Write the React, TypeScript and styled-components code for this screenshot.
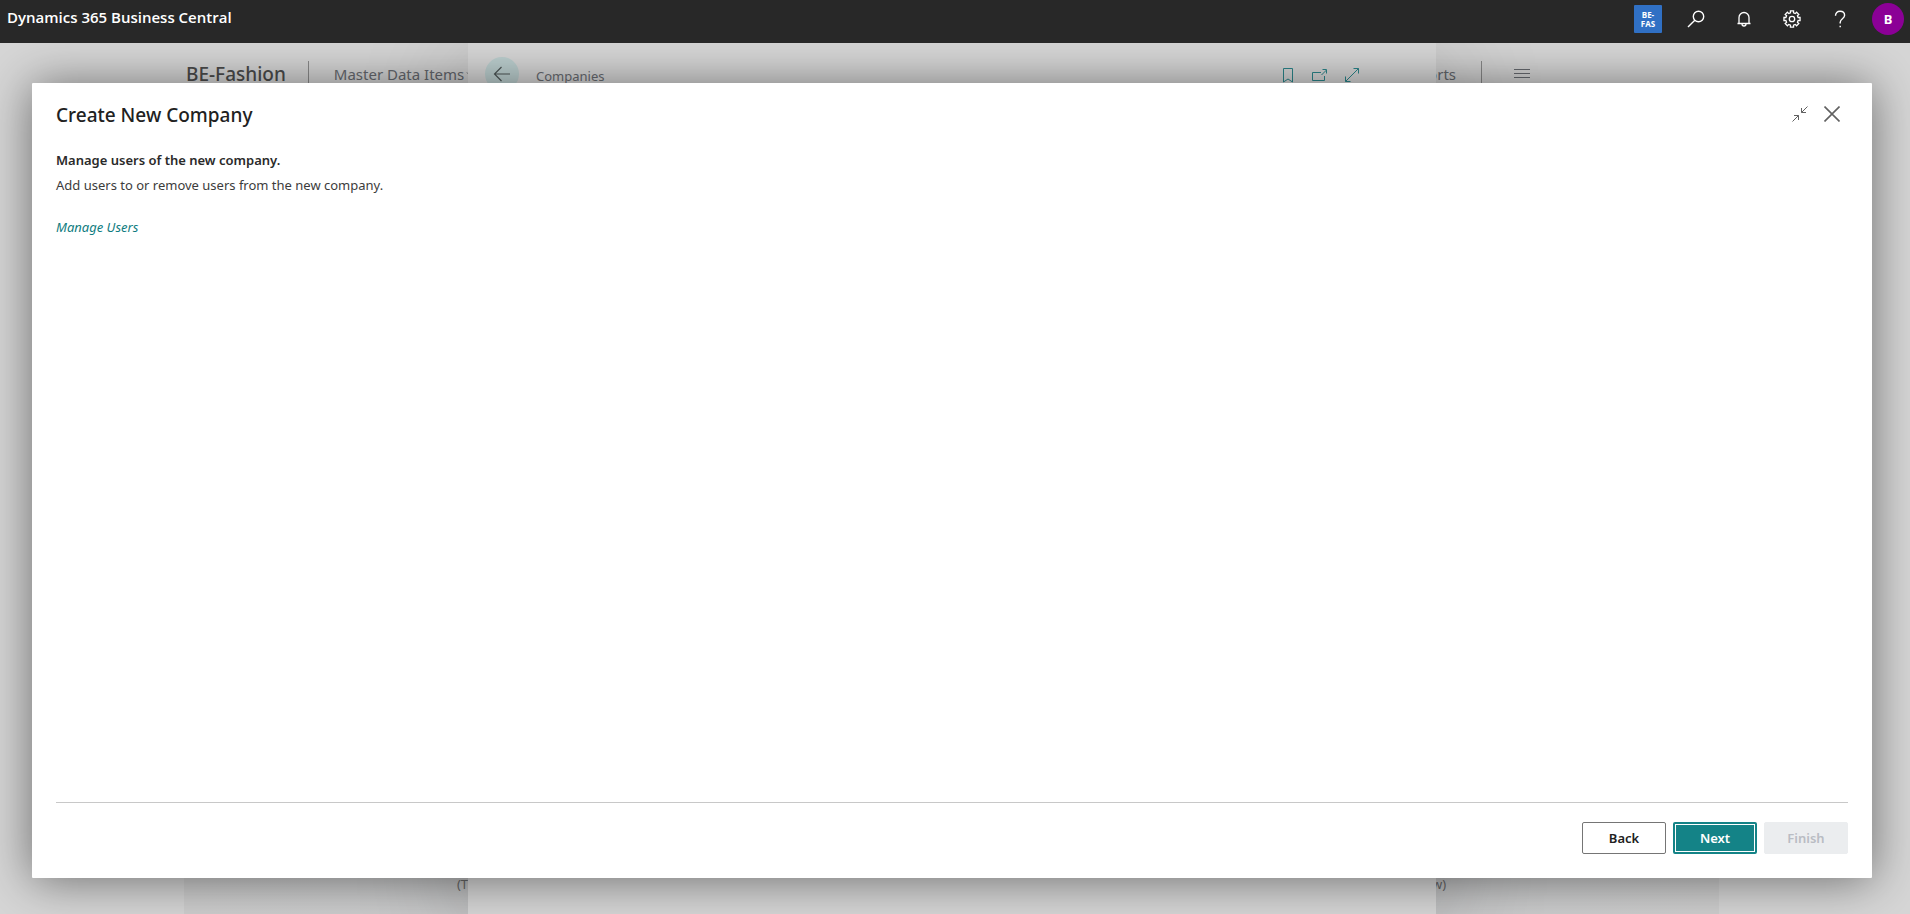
import React from "react";
import styled, { createGlobalStyle, css } from "styled-components";

const GlobalStyle = createGlobalStyle`
  * { box-sizing: border-box; }
  html, body { margin: 0; height: 100%; }
  body {
    font-family: "Noto Sans", "Open Sans", sans-serif;
    font-size: 13px;
    line-height: 20px;
    color: #212121;
    background: #d6d6d6;
    overflow: hidden;
  }
  h1, h2, h3, p { margin: 0; }
  button { font: inherit; color: inherit; cursor: pointer; }
`;

const Shell = styled.div`
  display: flex;
  flex-direction: column;
  height: 100vh;
`;

const TopBar = styled.header`
  display: flex;
  justify-content: space-between;
  align-items: flex-start;
  height: 43px;
  padding: 0 6px 0 7px;
  background: #282828;
  color: #fff;
`;

const Product = styled.a`
  padding-top: 7px;
  font-family: "Open Sans", "Noto Sans", sans-serif;
  font-size: 15px;
  font-weight: 600;
  color: #fff;
  text-decoration: none;
`;

const TopActions = styled.div`
  display: flex;
  align-items: center;
  height: 38px;
`;

const TopButton = styled.button`
  display: grid;
  place-items: center;
  width: 48px;
  height: 38px;
  padding: 0;
  border: 0;
  background: none;
`;

const CompanyBadge = styled.span`
  display: grid;
  place-items: center;
  width: 28px;
  height: 28px;
  border-radius: 1px;
  background: #3070c4;
  font-family: "Open Sans", "Noto Sans", sans-serif;
  font-size: 8px;
  font-weight: 700;
  line-height: 9px;
`;

const Avatar = styled.button`
  width: 32px;
  height: 32px;
  margin-left: 8px;
  padding: 0;
  border: 0;
  border-radius: 50%;
  background: #8b0096;
  font-size: 13px;
  font-weight: 700;
`;

const Stage = styled.main`
  position: relative;
  flex: 1;
  overflow: hidden;
`;

const RoleCenter = styled.div`
  display: flex;
  flex-direction: column;
  justify-content: space-between;
  height: 100%;
  padding: 18px 10% 0 184px;
`;

const Nav = styled.nav`
  display: flex;
  align-items: flex-start;
  height: 28px;
  padding: 0 189px 0 2px;
  color: #676a70;
  font-size: 15px;
  line-height: 26px;
`;

const CompanyName = styled.h2`
  font-size: 19px;
  font-weight: 500;
  color: #4b4b4b;
`;

const Rule = styled.span<{ $end?: boolean }>`
  width: 1px;
  height: 28px;
  margin: ${({ $end }) => ($end ? "0 32px 0 25px" : "0 25px 0 22px")};
  background: #8a8a8a;
`;

const NavButton = styled.button<{ $end?: boolean }>`
  display: flex;
  align-items: center;
  gap: 2px;
  height: 26px;
  padding: 0;
  border: 0;
  background: none;
  ${({ $end }) => $end && css`margin-left: auto;`}
`;

const Activities = styled.div`
  display: grid;
  grid-template-columns: 1fr 1fr;
  height: 46px;
  padding: 6px 8px 0;
  background: linear-gradient(90deg, #cecece, #cccdce 20%, #cdcdcd 50%, #cccdce 80%, #cecece);
  color: #6f6f6f;
  font-size: 13px;
  text-align: center;
`;

const Panel = styled.section`
  position: absolute;
  top: 0;
  bottom: 0;
  left: 468px;
  right: 474px;
  background: #d6d6d6;
  box-shadow: 0 20px 110px rgba(0, 0, 0, 0.2);
`;

const PanelBar = styled.div`
  display: flex;
  align-items: center;
  padding: 14px 76px 0 17px;
`;

const BackButton = styled.button`
  display: grid;
  place-items: center;
  width: 34px;
  height: 34px;
  padding: 0;
  border: 0;
  border-radius: 50%;
  background: #bccfcf;
`;

const PanelTitle = styled.h3`
  flex: 1;
  padding: 4px 0 0 17px;
  font-size: 13px;
  font-weight: 400;
  color: #676a70;
`;

const PanelTools = styled.div`
  display: flex;
  gap: 16px;
  padding-top: 2px;
  color: #2b858a;
`;

const IconButton = styled.button`
  display: grid;
  place-items: center;
  width: 16px;
  height: 16px;
  padding: 0;
  border: 0;
  background: none;
`;

const Dialog = styled.section`
  position: absolute;
  inset: 40px 38px 36px 32px;
  display: flex;
  flex-direction: column;
  padding: 16px 24px 24px;
  border-radius: 1px;
  background: #fff;
  box-shadow: 0 2px 48px rgba(0, 0, 0, 0.5);
`;

const DialogHead = styled.div`
  display: flex;
  justify-content: space-between;
  padding-right: 8px;
`;

const DialogTitle = styled.h1`
  font-size: 19px;
  font-weight: 500;
  line-height: 32px;
`;

const DialogTools = styled.div`
  display: flex;
  gap: 16px;
  padding-top: 7px;
  color: #616161;
`;

const DialogBody = styled.div`
  flex: 1;
  padding-top: 16px;
  color: #3c3c3c;
`;

const Heading = styled.h2`
  font-size: 13px;
  font-weight: 600;
  line-height: 26px;
  color: #2a2a2a;
`;

const Instruction = styled.p`
  line-height: 24px;
`;

const ActionLink = styled.a`
  display: inline-block;
  margin-top: 20px;
  color: #0f7c80;
  font-style: italic;
  text-decoration: none;
`;

const DialogFoot = styled.footer`
  display: flex;
  justify-content: flex-end;
  gap: 7px;
  padding-top: 19px;
  border-top: 1px solid #c8c8c8;
`;

const FootButton = styled.button<{ $primary?: boolean }>`
  width: 84px;
  height: 32px;
  padding: 0;
  border: 1px solid #757575;
  border-radius: 2px;
  background: #fff;
  font-weight: 600;
  ${({ $primary }) =>
    $primary &&
    css`
      border: 2px solid #148387;
      background: #148387;
      box-shadow: inset 0 0 0 1px #fff;
      color: #fff;
    `}
  &:disabled {
    border-color: #ebedef;
    background: #ebedef;
    color: #b9bcc3;
    cursor: default;
  }
`;

const GEAR_TEETH = Array.from({ length: 8 }, (_, i) => i * 45)
  .map((deg) => {
    const at = (r: number, a: number) => {
      const rad = ((deg + a) * Math.PI) / 180;
      return `${(9 + r * Math.cos(rad)).toFixed(2)} ${(9 + r * Math.sin(rad)).toFixed(2)}`;
    };
    return `${at(6.3, -14)} L${at(8.2, -11)} L${at(8.2, 11)} L${at(6.3, 14)}`;
  })
  .join(" L");

interface GlyphProps {
  size?: number;
  width?: number;
  children: React.ReactNode;
}

const Glyph = ({ size = 16, width = 1, children }: GlyphProps) => (
  <svg
    width={size}
    height={size}
    viewBox={`0 0 ${size} ${size}`}
    fill="none"
    stroke="currentColor"
    strokeWidth={width}
    aria-hidden="true"
  >
    {children}
  </svg>
);

export default function App() {
  return (
    <Shell>
      <GlobalStyle />
      <TopBar>
        <Product href="#home">Dynamics 365 Business Central</Product>
        <TopActions>
          <TopButton aria-label="Company">
            <CompanyBadge>
              BE-
              <br />
              FAS
            </CompanyBadge>
          </TopButton>
          <TopButton aria-label="Search">
            <Glyph size={18} width={1.4}>
              <circle cx="11.5" cy="6.5" r="5.2" />
              <path d="M7.8 10.2 1 17" />
            </Glyph>
          </TopButton>
          <TopButton aria-label="Notifications">
            <Glyph size={18} width={1.3}>
              <path d="M2.5 13.5H15.5M4 13.5V7.5a5 5 0 0 1 10 0v6M7 14a2 2 0 0 0 4 0" />
            </Glyph>
          </TopButton>
          <TopButton aria-label="Settings">
            <Glyph size={18} width={1.3}>
              <path d={`M${GEAR_TEETH}Z`} />
              <circle cx="9" cy="9" r="2.7" />
            </Glyph>
          </TopButton>
          <TopButton aria-label="Help">
            <Glyph size={18} width={1.4}>
              <path d="M4.500 5.800C4.500 3 6.300 1.300 9 1.300s4.600 1.600 4.600 4C13.600 8.700 9.200 8.700 9.200 12.300V13.500M9.200 15.800V17.300" />
            </Glyph>
          </TopButton>
          <Avatar aria-label="Account">B</Avatar>
        </TopActions>
      </TopBar>

      <Stage>
        <RoleCenter>
          <Nav>
            <CompanyName>BE-Fashion</CompanyName>
            <Rule />
            <NavButton>
              Master Data Items
              <Glyph size={10}>
                <path d="M1 3.500 5 7.500 9 3.500" />
              </Glyph>
            </NavButton>
            <NavButton $end>Reports</NavButton>
            <Rule $end />
            <NavButton aria-label="More pages">
              <Glyph>
                <path d="M0 3.500H16M0 7.500H16M0 11.500H16" />
              </Glyph>
            </NavButton>
          </Nav>
          <Activities>
            <p>(There is nothing to show in this view)</p>
            <p>(There is nothing to show in this view)</p>
          </Activities>
        </RoleCenter>

        <Panel>
          <PanelBar>
            <BackButton aria-label="Back to list">
              <Glyph size={18} width={1.2}>
                <path d="M17 9H1.500M8.500 2 1.500 9 8.500 16" stroke="#4c5555" />
              </Glyph>
            </BackButton>
            <PanelTitle>Companies</PanelTitle>
            <PanelTools>
              <IconButton aria-label="Bookmark">
                <Glyph>
                  <path d="M3.500 1.500H12.500V15L8 12 3.500 15Z" />
                </Glyph>
              </IconButton>
              <IconButton aria-label="Open in new window">
                <Glyph>
                  <path d="M9 5.500H.5V13.500H12.500V9M9.500 8 14.500 3M10.500 2.500H14.500V6.500" />
                </Glyph>
              </IconButton>
              <IconButton aria-label="Expand">
                <Glyph>
                  <path d="M1.500 14.500 14.500 1.500M9.500 1.500H14.500V6.500M1.500 9.500V14.500H6.500" />
                </Glyph>
              </IconButton>
            </PanelTools>
          </PanelBar>
        </Panel>

        <Dialog role="dialog" aria-labelledby="wizard-title">
          <DialogHead>
            <DialogTitle id="wizard-title">Create New Company</DialogTitle>
            <DialogTools>
              <IconButton aria-label="Collapse">
                <Glyph>
                  <path d="M15.500.5 9.500 6.500M9.500 2V6.500H14M.5 15.500 6.500 9.500M2 9.500H6.500V14" />
                </Glyph>
              </IconButton>
              <IconButton aria-label="Close">
                <Glyph width={1.6}>
                  <path d="M.5.5 15.500 15.500M15.500.5.5 15.500" />
                </Glyph>
              </IconButton>
            </DialogTools>
          </DialogHead>
          <DialogBody>
            <Heading>Manage users of the new company.</Heading>
            <Instruction>Add users to or remove users from the new company.</Instruction>
            <ActionLink href="#users">Manage Users</ActionLink>
          </DialogBody>
          <DialogFoot>
            <FootButton>Back</FootButton>
            <FootButton $primary>Next</FootButton>
            <FootButton disabled>Finish</FootButton>
          </DialogFoot>
        </Dialog>
      </Stage>
    </Shell>
  );
}
